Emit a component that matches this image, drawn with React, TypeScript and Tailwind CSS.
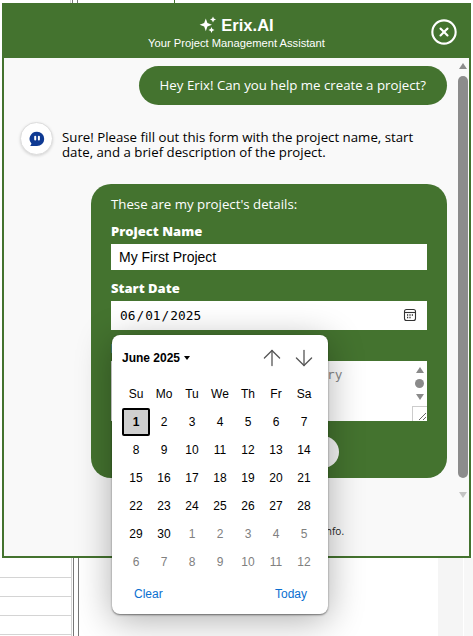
import { ArrowDown, ArrowUp, CircleX } from "lucide-react";

const week = ["Su", "Mo", "Tu", "We", "Th", "Fr", "Sa"];
const june = Array.from({ length: 30 }, (_, i) => i + 1);
const nextMonth = [1, 2, 3, 4, 5, 6, 7, 8, 9, 10, 11, 12];

const Sparkles = () => (
  <svg width="18" height="18" viewBox="0 0 18 18" fill="white">
    <path d="M6.8 2.5 L8.4 7 L13 8.8 L8.4 10.6 L6.8 15.2 L5.2 10.6 L.6 8.8 L5.2 7 Z" />
    <path d="M14 .5 L14.9 2.6 L17 3.5 L14.9 4.4 L14 6.5 L13.1 4.4 L11 3.5 L13.1 2.6 Z" />
    <path d="M12.5 11 L13.4 13.1 L15.5 14 L13.4 14.9 L12.5 17 L11.6 14.9 L9.5 14 L11.6 13.1 Z" />
  </svg>
);

const BotIcon = () => (
  <svg width="16" height="16" viewBox="0 0 16 16">
    <path d="M8 .7a7.2 7.2 0 0 1 0 14.4H1.2l1.3-2.3A7.2 7.2 0 0 1 8 .7Z" fill="#0f3a93" />
    <rect x="5.2" y="4.8" width="2" height="4.6" rx="1" fill="white" />
    <rect x="8.9" y="4.8" width="2" height="4.6" rx="1" fill="white" />
  </svg>
);

const CalendarIcon = () => (
  <svg width="14" height="14" viewBox="0 0 14 14" fill="none" stroke="#333" strokeWidth="1.1">
    <rect x="1.5" y="1.5" width="11" height="11" rx="2" />
    <path d="M1.5 4.5h11" />
    <path d="M4 7h1.2M6.4 7h1.2M8.8 7H10M4 9.5h1.2M6.4 9.5h1.2" strokeWidth="1.3" />
  </svg>
);

const DatePopover = () => {
  return (
    <div className="absolute left-[112px] top-[335px] w-[216px] h-[279px] rounded-lg bg-white px-[10px] font-['Liberation_Sans',sans-serif] text-[12px] text-black shadow-[0_1px_2px_rgba(0,0,0,0.5),0_6px_36px_rgba(0,0,0,0.32)]">
      <div className="flex h-[45px] items-center">
        <span className="font-bold">June 2025</span>
        <span className="ml-[4px] mt-[1px] border-x-[3px] border-t-[4px] border-x-transparent border-t-black" />
        <div className="ml-auto flex items-center gap-[6px] pr-[1px] text-[#555]">
          <ArrowUp size={26} strokeWidth={1.2} />
          <ArrowDown size={26} strokeWidth={1.2} />
        </div>
      </div>
      <div className="grid grid-cols-7 text-center">
        {week.map((d) => (
          <div key={d} className="flex h-[28px] items-center justify-center">
            {d}
          </div>
        ))}
        {june.map((d) => (
          <div
            key={d}
            className={
              d === 1
                ? "flex h-[28px] items-center justify-center rounded-[2px] border-2 border-black bg-[#cfcfcf] font-bold"
                : "flex h-[28px] items-center justify-center"
            }
          >
            {d}
          </div>
        ))}
        {nextMonth.map((d) => (
          <div key={`n${d}`} className="flex h-[28px] items-center justify-center text-[#808080]">
            {d}
          </div>
        ))}
      </div>
      <div className="flex items-center justify-between px-[12px] pt-[9px] text-[#0b6fd0]">
        <span>Clear</span>
        <span className="-mr-[1px]">Today</span>
      </div>
    </div>
  );
};

export default function App() {
  return (
    <div className="relative h-[636px] w-[473px] overflow-hidden bg-white pl-[2px] pt-[3px]">
      {/* sheet behind the widget */}
      <div className="absolute inset-x-0 top-0 flex h-[3px]">
        <div className="w-[71px] border-r border-[#d4d4d4]" />
        <div className="ml-[1px] w-[6px] border-x border-[#777]" />
        <div className="ml-[96px] w-px bg-[#44732f]" />
      </div>
      <div className="absolute inset-x-0 bottom-0 top-[558px] flex">
        <div className="flex h-full w-[72px] flex-col gap-[18px] border-r border-[#d4d4d4] pt-[19px]">
          <div className="h-px bg-[#d4d4d4]" />
          <div className="h-px bg-[#d4d4d4]" />
          <div className="h-px bg-[#d4d4d4]" />
          <div className="h-px bg-[#d4d4d4]" />
        </div>
        <div className="ml-[1px] h-full w-[6px] border-x border-[#777]" />
        <div className="ml-auto h-full w-[25px] bg-[#f5f5f5]" />
        <div className="ml-px h-full w-[9px] bg-[#f7f7f7]" />
      </div>

      <div className="relative flex h-[555px] w-[469px] flex-col border-2 border-t-0 border-[#44732f] bg-[#f9f9f9] font-['Open_Sans',sans-serif]">
        <div className="relative flex h-[55px] shrink-0 flex-col items-center bg-[#44732f] pt-[12px] text-white">
          <div className="flex items-center gap-[4px] font-['Liberation_Sans',sans-serif] text-[16.5px] font-bold leading-[20px]">
            <Sparkles />
            <span>Erix.AI</span>
          </div>
          <div className="mt-[1px] font-['Liberation_Sans',sans-serif] text-[11.2px] leading-[15px]">
            Your Project Management Assistant
          </div>
          <CircleX size={28} strokeWidth={1.8} className="absolute right-[11px] top-[15px]" />
        </div>

        <div className="flex min-h-0 flex-1">
          <div className="flex min-w-0 flex-1 flex-col pl-[16px] pr-[11px] pt-[8px]">
            <div className="self-end rounded-[20px] bg-[#44732f] px-[21px] py-[10px] text-[13.25px] leading-[19px] text-white">
              Hey Erix! Can you help me create a project?
            </div>

            <div className="mt-[17px] flex items-start gap-[9px]">
              <div className="flex h-[33px] w-[33px] shrink-0 items-center justify-center rounded-full border border-[#ddd] bg-white shadow-[0_1px_3px_rgba(0,0,0,0.15)]">
                <BotIcon />
              </div>
              <p className="w-[360px] pt-[8px] text-[13.25px] leading-[15px] text-black">
                Sure! Please fill out this form with the project name, start date, and a brief description of the project.
              </p>
            </div>

            <div className="mt-[24px] ml-[71px] flex h-[294px] flex-col rounded-[20px] bg-[#44732f] px-[20px] pt-[11px] text-white">
              <p className="text-[13.25px] leading-[19px]">These are my project's details:</p>
              <label className="mt-[8px] text-[13px] font-extrabold leading-[19px]">Project Name</label>
              <input
                readOnly
                value="My First Project"
                className="mt-[3px] h-[26px] w-full bg-white px-[8px] font-['Liberation_Sans',sans-serif] text-[14px] text-black outline-none"
              />
              <label className="mt-[9px] text-[13px] font-extrabold leading-[19px]">Start Date</label>
              <div className="relative mt-[3px] h-[29px] w-full">
                <input
                  type="date"
                  defaultValue="2025-06-01"
                  className="h-full w-full bg-white px-[8px] font-['DejaVu_Sans_Mono',monospace] text-[12.8px] text-black outline-none [&::-webkit-calendar-picker-indicator]:opacity-0"
                />
                <div className="pointer-events-none absolute right-[10px] top-[7px]">
                  <CalendarIcon />
                </div>
              </div>
              <label className="mt-[9px] text-[13px] font-extrabold leading-[19px]">Description</label>
              <div className="relative mt-[3px] h-[60px] w-full">
                <textarea
                  readOnly
                  placeholder="Enter a brief project summary"
                  className="block h-full w-full resize-none overflow-hidden bg-white px-[8px] py-[4px] font-['DejaVu_Sans_Mono',monospace] text-[12.8px] text-black outline-none placeholder:text-[#8a8a8a]"
                />
                <div className="absolute right-[2px] top-[6px] flex w-[11px] flex-col items-center gap-[6px]">
                  <span className="border-x-[4.5px] border-b-[6px] border-x-transparent border-b-[#8a8a8a]" />
                  <span className="h-[9px] w-[9px] rounded-full bg-[#8a8a8a]" />
                  <span className="border-x-[4.5px] border-t-[6px] border-x-transparent border-t-[#8a8a8a]" />
                </div>
                <div className="absolute bottom-0 right-0 h-[15px] w-[15px] border-l border-t border-[#ccc] bg-white">
                  <svg width="14" height="14" viewBox="0 0 14 14" stroke="#666" strokeWidth="1">
                    <path d="M6 13 13 6M10 13l3-3" />
                  </svg>
                </div>
              </div>
              <div className="mt-[15px] flex justify-center">
                <button className="h-[32px] w-[140px] rounded-full bg-[#f5f5f5] text-[14px] text-[#44732f]">Submit</button>
              </div>
            </div>

            <p className="mt-auto pb-[18px] pl-[106px] text-[10px] leading-[13px] text-[#222]">
              Erix may make mistakes. Check important info.
            </p>
          </div>

          <div className="mr-[1px] flex w-[10px] shrink-0 flex-col items-center pt-[5px]">
            <span className="border-x-[4.5px] border-b-[6px] border-x-transparent border-b-[#8c8c8c]" />
            <div className="mt-[7px] h-[402px] w-[10px] rounded-full bg-[#8c8c8c]" />
            <span className="mt-[14px] border-x-[4.5px] border-t-[6px] border-x-transparent border-t-[#c4c4c4]" />
          </div>
        </div>
      </div>

      <DatePopover />
    </div>
  );
}
